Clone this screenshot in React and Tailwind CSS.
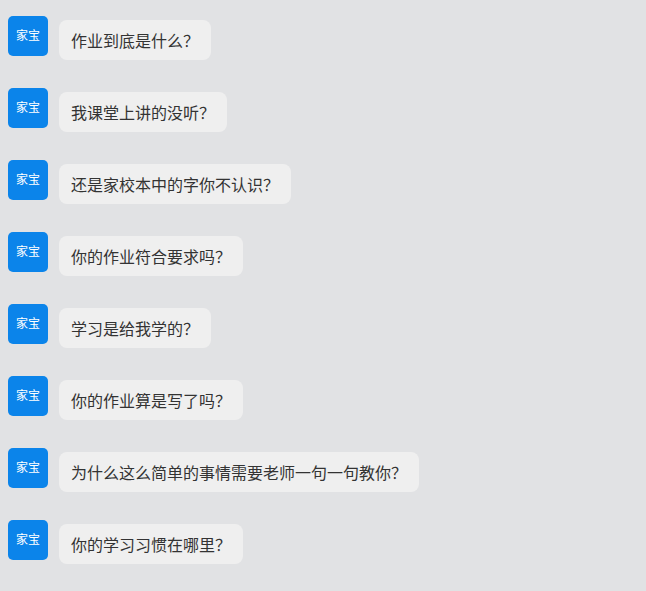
const messages = [
  '作业到底是什么？',
  '我课堂上讲的没听？',
  '还是家校本中的字你不认识？',
  '你的作业符合要求吗？',
  '学习是给我学的？',
  '你的作业算是写了吗？',
  '为什么这么简单的事情需要老师一句一句教你？',
  '你的学习习惯在哪里？',
]

export default function App() {
  return (
    <div
      className="min-h-[591px] w-full bg-[#e1e2e4]"
      style={{ fontFamily: '"Noto Sans CJK SC", "Noto Sans", sans-serif' }}
    >
      {messages.map((msg, i) => (
        <div key={i} className="flex items-start px-2 pt-4 pb-3">
          <div className="flex h-10 w-10 shrink-0 items-center justify-center rounded-[5px] bg-[#0b84ea] pb-[3px] text-[12px] text-white">
            家宝
          </div>
          <div className="ml-[11px] mt-1 rounded-lg bg-[#efefef] px-3 text-[16px] leading-10 text-[#333333]">
            {msg}
          </div>
        </div>
      ))}
    </div>
  )
}
